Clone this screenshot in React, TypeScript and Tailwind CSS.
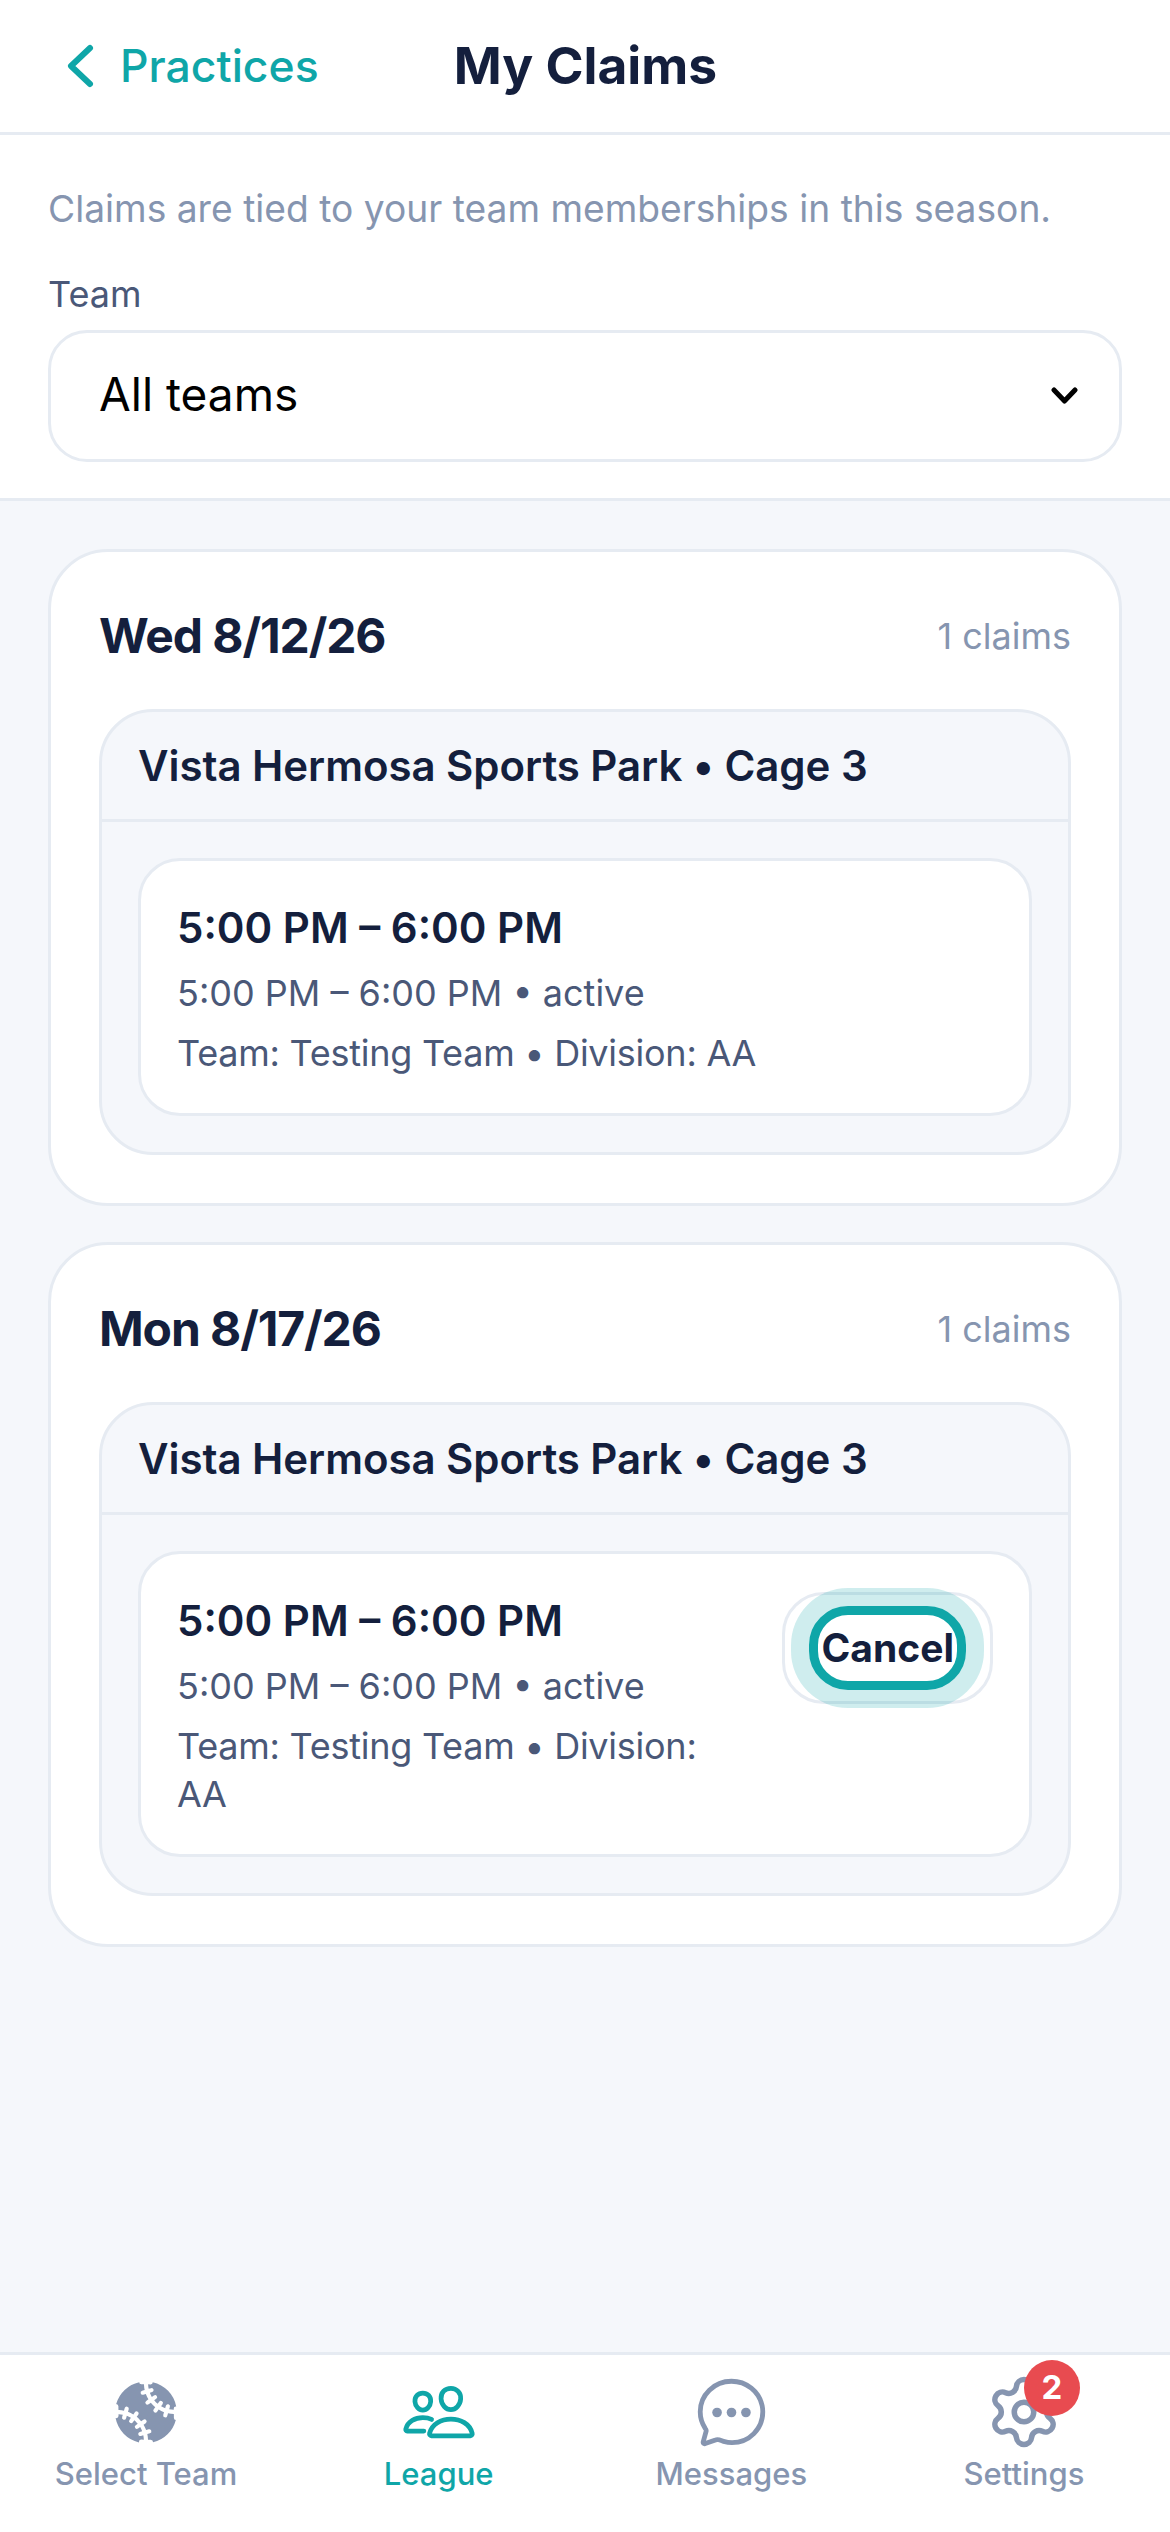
import React from "react";
import { IoBaseball, IoChatbubbleEllipsesOutline, IoPeopleOutline } from "react-icons/io5";
import { Settings } from "lucide-react";

interface Claim {
  date: string;
  cancel: boolean;
}

const claims: Claim[] = [
  { date: "Wed 8/12/26", cancel: false },
  { date: "Mon 8/17/26", cancel: true },
];

const ClaimCard: React.FC<Claim> = ({ date, cancel }) => (
  <div className="rounded-[60px] border-[3px] border-[#e6ebf2] bg-white px-[48px] pt-[51px] pb-[48px]">
    <div className="flex items-center justify-between">
      <h2 className="text-[48px] leading-[66px] font-bold tracking-[-1.1px] text-[#141f3d]">{date}</h2>
      <span className="text-[36px] leading-[48px] text-[#8695b0]">1 claims</span>
    </div>
    <div className="mt-[40px] rounded-[54px] border-[3px] border-[#e6ebf2] bg-[#f5f7fb]">
      <div className="border-b-[3px] border-[#e6ebf2] px-[36px] py-[28px] text-[42px] leading-[51px] font-semibold tracking-[-0.05px] text-[#141f3d]">
        Vista Hermosa Sports Park • Cage 3
      </div>
      <div className="p-[36px]">
        <div className="flex items-start justify-between gap-[36px] rounded-[42px] border-[3px] border-[#e6ebf2] bg-white px-[36px] pt-[36px] pb-[36px]">
          <div className="min-w-0 flex-1 pt-[4px]">
            <div className="text-[42px] leading-[54px] font-semibold text-[#141f3d]">5:00 PM – 6:00 PM</div>
            <div className="mt-[14px] text-[36px] leading-[48px] text-[#4a5878]">5:00 PM – 6:00 PM • active</div>
            <div className="mt-[12px] text-[36px] leading-[48px] tracking-[-0.25px] text-[#4a5878]">Team: Testing Team • Division: AA</div>
          </div>
          {cancel && (
            <button className="mt-[2px] shrink-0 rounded-[42px] border-[3px] border-[#e6ebf2] px-[24px] py-[11px]">
              <span className="block rounded-[39px] border-[9px] border-[#0fa6a8] bg-white px-[3px] text-[39px] leading-[66px] font-bold text-[#141f3d] shadow-[0_0_0_18px_rgba(15,166,168,0.2)]">
                Cancel
              </span>
            </button>
          )}
        </div>
      </div>
    </div>
  </div>
);

interface TabProps {
  label: string;
  active?: boolean;
  children: React.ReactNode;
}

const Tab: React.FC<TabProps> = ({ label, active, children }) => (
  <div className={`relative flex w-[292px] flex-col items-center ${active ? "text-[#0fa6a8]" : "text-[#8695b0]"}`}>
    <div className="flex h-[66px] w-[66px] items-center justify-center">{children}</div>
    <span className="mt-[8px] text-[31px] leading-[42px] font-medium">{label}</span>
  </div>
);

export default function App() {
  return (
    <div className="flex h-[2532px] w-[1170px] flex-col overflow-hidden bg-[#f5f7fb] font-['Inter',sans-serif]">
      {/* Header */}
      <div className="flex h-[135px] shrink-0 items-center border-b-[3px] border-[#e6ebf2] bg-white pl-[61px]">
        <svg width="36" height="48" viewBox="0 0 36 48" fill="none" className="text-[#0fa6a8]">
          <path d="M29 6 L10 24 L29 42" stroke="currentColor" strokeWidth="6" strokeLinecap="round" strokeLinejoin="round" />
        </svg>
        <span className="ml-[23px] text-[44.5px] font-medium text-[#0fa6a8]">Practices</span>
        <h1 className="ml-[135px] text-[51.5px] font-bold text-[#141f3d]">My Claims</h1>
      </div>

      {/* Filter */}
      <div className="shrink-0 border-b-[3px] border-[#e6ebf2] bg-white px-[48px] pt-[50px] pb-[36px]">
        <p className="text-[37.2px] leading-[48px] text-[#8695b0]">Claims are tied to your team memberships in this season.</p>
        <div className="mt-[37px] text-[36px] leading-[48px] text-[#4a5878]">Team</div>
        <div className="mt-[12px] flex h-[132px] items-center justify-between rounded-[39px] border-[3px] border-[#e6ebf2] pl-[48px] pr-[41px]">
          <span className="pb-[3px] text-[46px] text-black">All teams</span>
          <svg width="27" height="18" viewBox="0 0 27 18" fill="none">
            <path d="M3 3 L13.5 14 L24 3" stroke="black" strokeWidth="5" strokeLinecap="round" strokeLinejoin="round" />
          </svg>
        </div>
      </div>

      {/* Claims */}
      <div className="flex flex-1 flex-col gap-[36px] px-[48px] pt-[48px]">
        {claims.map((c) => (
          <ClaimCard key={c.date} {...c} />
        ))}
      </div>

      {/* Tab bar */}
      <div className="flex h-[180px] shrink-0 justify-between border-t-[3px] border-[#e6ebf2] bg-white pt-[24px]">
        <Tab label="Select Team">
          <IoBaseball size={76} className="shrink-0" />
        </Tab>
        <Tab label="League" active>
          <IoPeopleOutline size={76} className="shrink-0" />
        </Tab>
        <Tab label="Messages">
          <IoChatbubbleEllipsesOutline size={77} className="shrink-0" />
        </Tab>
        <Tab label="Settings">
          <Settings size={78} strokeWidth={1.7} className="shrink-0" />
          <span className="absolute top-[-19px] left-[146px] flex h-[56px] w-[56px] items-center justify-center rounded-full bg-[#e84b50] text-[33px] font-bold text-white">
            2
          </span>
        </Tab>
      </div>
    </div>
  );
}
